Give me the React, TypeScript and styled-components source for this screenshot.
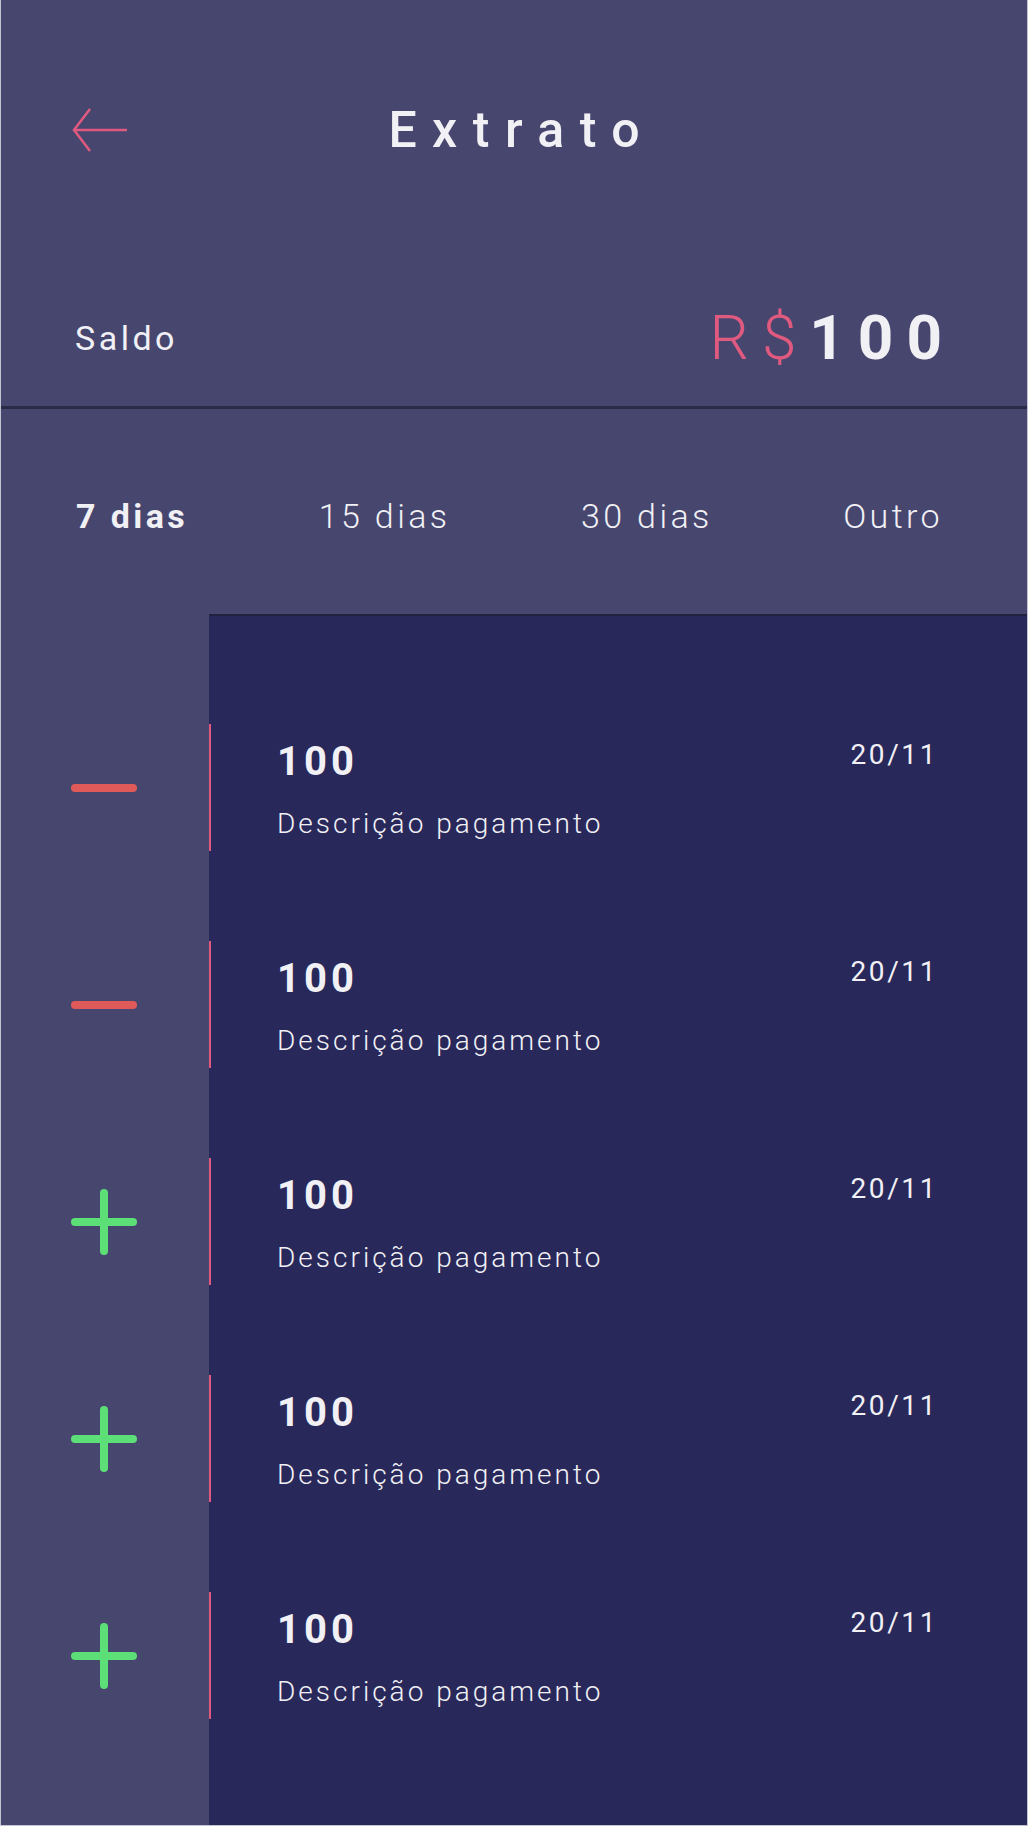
import React, { FC } from 'react'
import styled, { createGlobalStyle } from 'styled-components'

const GlobalStyle = createGlobalStyle`
    * {
        box-sizing: border-box;
    }
    body {
        margin: 0;
        background: #29285a;
        font-family: Roboto, 'Liberation Sans', sans-serif;
    }
`

const Page = styled.div`
    display: flex;
    flex-direction: column;
    min-height: 100vh;
    border: 1px solid #c3c3d2;
    border-top: none;
    color: #f1f1f5;
`

const Header = styled.header`
    display: flex;
    flex-direction: column;
    gap: 141px;
    padding: 100px 0 31px;
    background: #47466f;
    border-bottom: 3px solid #2b2a47;
`

const TitleRow = styled.div`
    display: grid;
    grid-template-columns: 1fr auto 1fr;
    align-items: center;
`

const BackButton = styled.button`
    justify-self: start;
    display: flex;
    margin-left: 71px;
    padding: 0;
    border: none;
    background: none;
    cursor: pointer;
`

const Title = styled.h1`
    margin: 0;
    padding-left: 15.5px;
    font-size: 50px;
    line-height: 60px;
    font-weight: 500;
    letter-spacing: 15.5px;
`

const BalanceRow = styled.div`
    display: flex;
    align-items: center;
    justify-content: space-between;
    padding: 0 72px 0 74px;
`

const Label = styled.span`
    font-size: 34px;
    line-height: 1.2;
    letter-spacing: 3.5px;
`

const Balance = styled.div`
    font-size: 62px;
    line-height: 1.2;
    letter-spacing: 13px;
`

const Currency = styled.span`
    color: #e05a7f;
    font-weight: 300;
`

const Value = styled.span`
    font-weight: 700;
`

const Tabs = styled.nav`
    display: flex;
    justify-content: space-between;
    padding: 87px 84px 77px 75px;
    background: #47466f;
`

const Tab = styled.button<{ $active?: boolean }>`
    padding: 0;
    border: none;
    background: none;
    color: #f1f1f5;
    font-family: inherit;
    font-size: 34px;
    line-height: 41px;
    letter-spacing: 3.4px;
    font-weight: ${({ $active }) => ($active ? 700 : 300)};
    cursor: pointer;
`

const Body = styled.div`
    flex: 1;
    display: flex;
    background: #47466f;
`

const Sidebar = styled.div`
    width: 208px;
    display: flex;
    flex-direction: column;
    gap: 90px;
    padding-top: 110px;
`

const IconCell = styled.div`
    height: 127px;
    display: flex;
    align-items: center;
    justify-content: center;
    padding-right: 2px;
`

const Panel = styled.ul`
    flex: 1;
    display: flex;
    flex-direction: column;
    gap: 90px;
    margin: 0;
    padding: 108px 0 0;
    list-style: none;
    background: #29285a;
    border-top: 2px solid #22213f;
`

const Row = styled.li`
    height: 127px;
    display: grid;
    grid-template-columns: 1fr auto;
    align-items: start;
    padding: 0 89px 0 66px;
    border-left: 2px solid #e05a7f;
`

const Info = styled.div`
    display: flex;
    flex-direction: column;
`

const Amount = styled.span`
    margin-top: 14px;
    font-size: 40px;
    line-height: 48px;
    font-weight: 700;
    letter-spacing: 4px;
`

const Description = styled.span`
    margin-top: 21px;
    font-size: 28px;
    line-height: 34px;
    font-weight: 300;
    letter-spacing: 3px;
`

const DateText = styled.span`
    margin-top: 14px;
    font-size: 28px;
    line-height: 34px;
    letter-spacing: 2.6px;
`

const BackArrow: FC = () => (
    <svg width="56" height="46" viewBox="0 0 56 46" fill="none">
        <path d="M18 2 L2 23 L18 44 M2 23 H55" stroke="#e05a7f" strokeWidth="2.5" />
    </svg>
)

const SignIcon: FC<{ positive: boolean }> = ({ positive }) => (
    <svg width="66" height="66" viewBox="0 0 66 66">
        <g stroke={positive ? '#5ddf78' : '#e05a5a'} strokeWidth="8" strokeLinecap="round">
            <line x1="4" y1="33" x2="62" y2="33" />
            {positive && <line x1="33" y1="4" x2="33" y2="62" />}
        </g>
    </svg>
)

const transactions = [
    { id: 1, value: 100, description: 'Descrição pagamento', date: '20/11', positive: false },
    { id: 2, value: 100, description: 'Descrição pagamento', date: '20/11', positive: false },
    { id: 3, value: 100, description: 'Descrição pagamento', date: '20/11', positive: true },
    { id: 4, value: 100, description: 'Descrição pagamento', date: '20/11', positive: true },
    { id: 5, value: 100, description: 'Descrição pagamento', date: '20/11', positive: true },
]

const periods = ['7 dias', '15 dias', '30 dias', 'Outro']

const App: FC = () => {
    const active = '7 dias'

    return (
        <>
            <GlobalStyle />
            <Page>
                <Header>
                    <TitleRow>
                        <BackButton aria-label="Voltar">
                            <BackArrow />
                        </BackButton>
                        <Title>Extrato</Title>
                    </TitleRow>
                    <BalanceRow>
                        <Label>Saldo</Label>
                        <Balance>
                            <Currency>R$</Currency>
                            <Value>100</Value>
                        </Balance>
                    </BalanceRow>
                </Header>
                <Tabs>
                    {periods.map((p) => (
                        <Tab key={p} $active={p === active}>
                            {p}
                        </Tab>
                    ))}
                </Tabs>
                <Body>
                    <Sidebar>
                        {transactions.map((t) => (
                            <IconCell key={t.id}>
                                <SignIcon positive={t.positive} />
                            </IconCell>
                        ))}
                    </Sidebar>
                    <Panel>
                        {transactions.map((t) => (
                            <Row key={t.id}>
                                <Info>
                                    <Amount>{t.value}</Amount>
                                    <Description>{t.description}</Description>
                                </Info>
                                <DateText>{t.date}</DateText>
                            </Row>
                        ))}
                    </Panel>
                </Body>
            </Page>
        </>
    )
}

export default App
